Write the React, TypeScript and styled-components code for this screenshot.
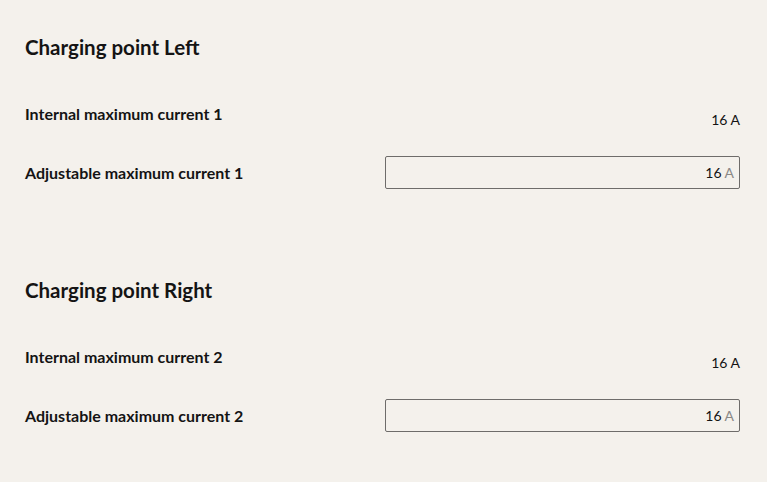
import React from "react";
import styled, { createGlobalStyle } from "styled-components";

const Global = createGlobalStyle`
  html, body { margin: 0; padding: 0; background: #f4f1ec; }
  body { font-family: Lato, "Noto Sans", sans-serif; color: #141414; }
`;

const Page = styled.div`
  padding: 34px 27px 0 25px;
  display: flex;
  flex-direction: column;
`;

const Section = styled.section`
  display: flex;
  flex-direction: column;
  margin-bottom: 88px;
`;

const Heading = styled.h2`
  margin: 0 0 37px;
  font-size: 20.5px;
  font-weight: 700;
  line-height: 26px;
`;

const Row = styled.div<{ $gap?: number }>`
  display: grid;
  grid-template-columns: 1fr 355px;
  align-items: center;
  margin-bottom: ${(p) => p.$gap ?? 0}px;
`;

const Label = styled.div`
  font-size: 16px;
  font-weight: 700;
  line-height: 20px;
`;

const Value = styled.div`
  font-size: 14px;
  text-align: right;
  padding-top: 13px;
  line-height: 20px;
`;

const InputBox = styled.div`
  height: 33px;
  box-sizing: border-box;
  border: 1px solid #6e6c6a;
  border-radius: 2px;
  display: flex;
  align-items: center;
  justify-content: flex-end;
  padding-right: 5px;
  font-size: 14px;
`;

const Unit = styled.span`
  color: #8a8886;
  margin-left: 3px;
`;

const data = [
  { title: "Charging point Left", n: 1 },
  { title: "Charging point Right", n: 2 },
];

export default function App() {
  return (
    <>
      <Global />
      <Page>
        {data.map((s) => (
          <Section key={s.n}>
            <Heading>{s.title}</Heading>
            <Row $gap={26}>
              <Label>Internal maximum current {s.n}</Label>
              <Value>16 A</Value>
            </Row>
            <Row>
              <Label>Adjustable maximum current {s.n}</Label>
              <InputBox>
                16<Unit>A</Unit>
              </InputBox>
            </Row>
          </Section>
        ))}
      </Page>
    </>
  );
}
